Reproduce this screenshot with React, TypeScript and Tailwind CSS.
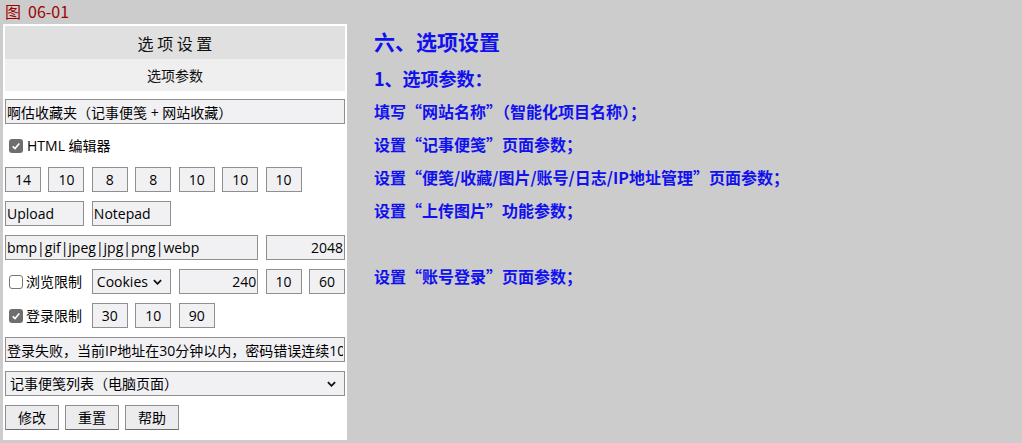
import React from 'react';

const sans = '"Open Sans", "Noto Sans CJK SC", sans-serif';
const cjk = '"Noto Sans CJK SC", "Noto Sans", sans-serif';

const box =
  'h-[25px] min-w-0 w-full border border-[#8f8f8f] bg-[#f1f1f4] text-[14px] text-black outline-none px-[1px]';

const Check = ({ checked }: { checked?: boolean }) =>
  checked ? (
    <span className="flex size-[14px] shrink-0 items-center justify-center rounded-[3px] bg-[#6e6e6e]">
      <svg viewBox="0 0 12 12" className="size-[10px]">
        <path d="M2 6.4 4.8 9 10 3" fill="none" stroke="#fff" strokeWidth="2" />
      </svg>
    </span>
  ) : (
    <span className="size-[14px] shrink-0 rounded-[3px] border border-[#767676] bg-white" />
  );

const Chevron = () => (
  <svg viewBox="0 0 10 6" className="pointer-events-none absolute top-1/2 h-[6px] w-[9px] -translate-y-1/2">
    <path d="M1 1 5 5 9 1" fill="none" stroke="#111" strokeWidth="2" />
  </svg>
);

const NumBox = ({ v, span = '' }: { v: string; span?: string }) => (
  <input readOnly defaultValue={v} className={`${box} text-center ${span}`} />
);

const Btn = ({ label }: { label: string }) => (
  <button
    type="button"
    className="h-[25px] w-[54px] border border-[#8f8f8f] border-b-[#6a6a6a] bg-[#ececef] text-[14px] text-black"
  >
    {label}
  </button>
);

const notes = [
  '填写“网站名称”（智能化项目名称）；',
  '设置“记事便笺”页面参数；',
  '设置“便笺/收藏/图片/账号/日志/IP地址管理”页面参数；',
  '设置“上传图片”功能参数；',
  '',
  '设置“账号登录”页面参数；',
];

export default function App() {
  return (
    <div className="flex h-[443px] w-[1022px] bg-[#cccccc]" style={{ fontFamily: sans }}>
      {/* left: settings form */}
      <div className="flex flex-col pl-[3px]">
        <div className="flex h-[24px] items-start gap-[7px] pl-[2px] pt-[2px] text-[16px] leading-[18px] text-[#a00000]" style={{ fontFamily: cjk }}>
          <span>图</span>
          <span>06-01</span>
        </div>
        <div className="w-[344px] bg-white p-[2px]">
          <div className="flex h-[33px] items-center justify-center bg-[#e0e0e0] text-[16px] text-[#111]" style={{ fontFamily: cjk }}>
            选 项 设 置
          </div>
          <div className="flex h-[32px] items-center justify-center bg-[#efefef] text-[14px] text-[#111]" style={{ fontFamily: cjk }}>
            选项参数
          </div>

          <div className="flex flex-col gap-[9px] pb-[8px] pt-[8px]">
            <input readOnly defaultValue="啊估收藏夹（记事便笺 + 网站收藏）" className={box} />

            <label className="flex h-[25px] items-center gap-[4px] pl-[4px] text-[14px] text-black">
              <Check checked />
              <span>HTML 编辑器</span>
            </label>

            <div className="grid grid-cols-8 gap-x-[7.43px]">
              {['14', '10', '8', '8', '10', '10', '10'].map((v, i) => (
                <NumBox key={i} v={v} />
              ))}
            </div>

            <div className="grid grid-cols-8 gap-x-[7.43px]">
              <input readOnly defaultValue="Upload" className={`${box} col-span-2`} />
              <input readOnly defaultValue="Notepad" className={`${box} col-span-2`} />
            </div>

            <div className="grid grid-cols-8 gap-x-[7.43px]">
              <input readOnly defaultValue="bmp|gif|jpeg|jpg|png|webp" className={`${box} col-span-6`} />
              <input readOnly defaultValue="2048" className={`${box} col-span-2 text-right`} />
            </div>

            <div className="grid grid-cols-8 gap-x-[7.43px]">
              <label className="col-span-2 flex h-[25px] items-center gap-[3px] pl-[4px] text-[14px] text-black">
                <Check />
                <span>浏览限制</span>
              </label>
              <div className="relative col-span-2">
                <select defaultValue="Cookies" className={`${box} appearance-none pl-[4px]`}>
                  <option>Cookies</option>
                  <option>Session</option>
                </select>
                <span className="absolute inset-y-0 right-[18px]">
                  <Chevron />
                </span>
              </div>
              <NumBox v="240" span="col-span-2 !text-right" />
              <NumBox v="10" />
              <NumBox v="60" />
            </div>

            <div className="grid grid-cols-8 gap-x-[7.43px]">
              <label className="col-span-2 flex h-[25px] items-center gap-[3px] pl-[4px] text-[14px] text-black">
                <Check checked />
                <span>登录限制</span>
              </label>
              <NumBox v="30" />
              <NumBox v="10" />
              <NumBox v="90" />
            </div>

            <input
              readOnly
              defaultValue="登录失败，当前IP地址在30分钟以内，密码错误连续10次，禁止登录。"
              className={box}
            />

            <div className="relative">
              <select defaultValue="list" className={`${box} appearance-none pl-[4px]`}>
                <option value="list">记事便笺列表（电脑页面）</option>
                <option value="mobile">记事便笺列表（手机页面）</option>
              </select>
              <span className="absolute inset-y-0 right-[18px]">
                <Chevron />
              </span>
            </div>

            <div className="flex gap-[6px]">
              <Btn label="修改" />
              <Btn label="重置" />
              <Btn label="帮助" />
            </div>
          </div>
        </div>
      </div>

      {/* right: notes */}
      <div className="flex flex-col pl-[27px] pt-[24px] font-bold text-[#1111ee]" style={{ fontFamily: cjk }}>
        <div className="h-[34px] text-[21px] leading-[34px]">六、选项设置</div>
        <div className="mt-[3px] h-[34px] text-[18px] leading-[34px]">1、选项参数：</div>
        {notes.map((n, i) => (
          <div key={i} className="h-[33px] text-[16px] leading-[33px]">
            {n}
          </div>
        ))}
      </div>
    </div>
  );
}
